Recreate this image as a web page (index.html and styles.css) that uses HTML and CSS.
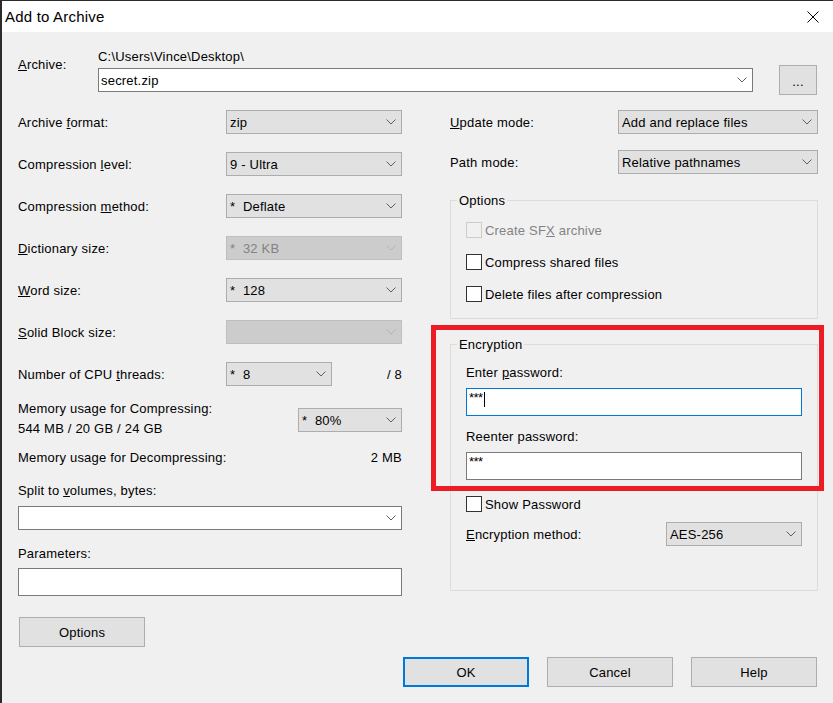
FILE: index.html
```html
<!DOCTYPE html>
<html lang="en">
<head>
<meta charset="utf-8">
<title>Add to Archive</title>
<link rel="stylesheet" href="styles.css">
</head>
<body>
<div class="window">
  <div class="titlebar">
    <span class="title">Add to Archive</span>
    <svg class="close" width="12" height="12" viewBox="0 0 12 12"><path d="M0.5 0.5L11.5 11.5M11.5 0.5L0.5 11.5" stroke="#000" stroke-width="1" fill="none"/></svg>
  </div>
  <div class="content">
    <div class="archive">
      <div class="archive-label"><u>A</u>rchive:</div>
      <div class="archive-body">
        <div class="path">C:\Users\Vince\Desktop\</div>
        <div class="archive-row">
          <div class="combo archive-combo"><span class="val">secret.zip</span><svg class="chev" width="10" height="6" viewBox="0 0 10 6"><path d="M0.5 0.5L5 5L9.5 0.5" fill="none" stroke="currentColor"/></svg></div>
          <div class="btn btn-browse">...</div>
        </div>
      </div>
    </div>

    <div class="main">
      <div class="left">
        <div class="field"><span class="lbl">Archive <u>f</u>ormat:</span><div class="select w176"><span class="val">zip</span><svg class="chev" width="10" height="6" viewBox="0 0 10 6"><path d="M0.5 0.5L5 5L9.5 0.5" fill="none" stroke="currentColor"/></svg></div></div>
        <div class="field"><span class="lbl">Compression <u>l</u>evel:</span><div class="select w176"><span class="val">9 - Ultra</span><svg class="chev" width="10" height="6" viewBox="0 0 10 6"><path d="M0.5 0.5L5 5L9.5 0.5" fill="none" stroke="currentColor"/></svg></div></div>
        <div class="field"><span class="lbl">Compression <u>m</u>ethod:</span><div class="select w176"><span class="val">*  Deflate</span><svg class="chev" width="10" height="6" viewBox="0 0 10 6"><path d="M0.5 0.5L5 5L9.5 0.5" fill="none" stroke="currentColor"/></svg></div></div>
        <div class="field"><span class="lbl"><u>D</u>ictionary size:</span><div class="select w176 disabled"><span class="val">*  32 KB</span><svg class="chev" width="10" height="6" viewBox="0 0 10 6"><path d="M0.5 0.5L5 5L9.5 0.5" fill="none" stroke="currentColor"/></svg></div></div>
        <div class="field"><span class="lbl"><u>W</u>ord size:</span><div class="select w176"><span class="val">*  128</span><svg class="chev" width="10" height="6" viewBox="0 0 10 6"><path d="M0.5 0.5L5 5L9.5 0.5" fill="none" stroke="currentColor"/></svg></div></div>
        <div class="field"><span class="lbl"><u>S</u>olid Block size:</span><div class="select w176 disabled"><span class="val"></span><svg class="chev" width="10" height="6" viewBox="0 0 10 6"><path d="M0.5 0.5L5 5L9.5 0.5" fill="none" stroke="currentColor"/></svg></div></div>
        <div class="field"><span class="lbl">Number of CPU <u>t</u>hreads:</span><div class="select w106"><span class="val">*  8</span><svg class="chev" width="10" height="6" viewBox="0 0 10 6"><path d="M0.5 0.5L5 5L9.5 0.5" fill="none" stroke="currentColor"/></svg></div><span class="num">/ 8</span></div>
        <div class="field mem"><div class="lbl-mem">Memory usage for Compressing:<br>544 MB / 20 GB / 24 GB</div><div class="select w104"><span class="val">*  80%</span><svg class="chev" width="10" height="6" viewBox="0 0 10 6"><path d="M0.5 0.5L5 5L9.5 0.5" fill="none" stroke="currentColor"/></svg></div></div>
        <div class="field decomp"><span class="lbl-wide">Memory usage for Decompressing:</span><span class="num-r">2 MB</span></div>
        <div class="split-label">Split to <u>v</u>olumes, bytes:</div>
        <div class="combo split-combo"><span class="val"></span><svg class="chev" width="10" height="6" viewBox="0 0 10 6"><path d="M0.5 0.5L5 5L9.5 0.5" fill="none" stroke="currentColor"/></svg></div>
        <div class="param-label">Parameters:</div>
        <div class="textbox params"></div>
        <div class="btn btn-options">Options</div>
      </div>

      <div class="right">
        <div class="field"><span class="lbl-r"><u>U</u>pdate mode:</span><div class="select w200"><span class="val">Add and replace files</span><svg class="chev" width="10" height="6" viewBox="0 0 10 6"><path d="M0.5 0.5L5 5L9.5 0.5" fill="none" stroke="currentColor"/></svg></div></div>
        <div class="field path-row"><span class="lbl-r">Path mode:</span><div class="select w200"><span class="val">Relative pathnames</span><svg class="chev" width="10" height="6" viewBox="0 0 10 6"><path d="M0.5 0.5L5 5L9.5 0.5" fill="none" stroke="currentColor"/></svg></div></div>

        <fieldset class="group opts">
          <legend>Options</legend>
          <div class="group-body">
            <div class="check disabled"><span class="box"></span><span class="ctext">Create SF<u>X</u> archive</span></div>
            <div class="check"><span class="box"></span><span class="ctext">Compress shared files</span></div>
            <div class="check"><span class="box"></span><span class="ctext">Delete files after compression</span></div>
          </div>
        </fieldset>

        <fieldset class="group enc">
          <legend>Encryption</legend>
          <div class="group-body">
            <div class="elabel first">Enter <u>p</u>assword:</div>
            <div class="textbox pw focus"><span class="stars">***</span><span class="caret"></span></div>
            <div class="elabel">Reenter password:</div>
            <div class="textbox pw"><span class="stars">***</span></div>
            <div class="check show"><span class="box"></span><span class="ctext">Show Password</span></div>
            <div class="field enc-row"><span class="lbl-e"><u>E</u>ncryption method:</span><div class="select w136"><span class="val">AES-256</span><svg class="chev" width="10" height="6" viewBox="0 0 10 6"><path d="M0.5 0.5L5 5L9.5 0.5" fill="none" stroke="currentColor"/></svg></div></div>
          </div>
        </fieldset>
      </div>
    </div>

    <div class="footer">
      <div class="btn btn-ok">OK</div>
      <div class="btn">Cancel</div>
      <div class="btn">Help</div>
    </div>
  </div>
  <div class="annot"></div>
</div>
</body>
</html>
```

FILE: styles.css
```css
html, body {
  margin: 0;
  padding: 0;
  background: #f0f0f0;
}
body {
  font-family: "Liberation Sans", Arial, sans-serif;
  font-size: 13px;
  line-height: 16px;
  letter-spacing: 0.2px;
  color: #000;
}
u {
  text-decoration: underline;
  text-underline-offset: 1px;
}
.window {
  position: relative;
  width: 833px;
  height: 703px;
  box-sizing: border-box;
  border-left: 2px solid #2b2b2b;
  border-top: 1px solid #2b2b2b;
  background: #f0f0f0;
  overflow: hidden;
}
.titlebar {
  height: 31px;
  background: #fff;
  display: flex;
  align-items: center;
  justify-content: space-between;
  padding: 0 14px 0 3px;
}
.title {
  font-size: 15px;
  line-height: 18px;
}
.close {
  display: block;
}
.content {
  padding: 16px 15px 0 16px;
}

/* archive row */
.archive {
  display: flex;
}
.archive-label {
  width: 80px;
  flex: none;
  padding-top: 9px;
}
.archive-body {
  flex: 1;
}
.path {
  height: 16px;
  margin-bottom: 1px;
  padding-top: 1px;
  box-sizing: border-box;
}
.archive-row {
  display: flex;
  align-items: center;
  gap: 26px;
  height: 30px;
  padding-right: 1px;
}

/* controls */
.select, .combo {
  box-sizing: border-box;
  height: 24px;
  display: flex;
  align-items: center;
  justify-content: space-between;
  padding: 0 5px 0 3px;
  border: 1px solid #adadad;
  background: #e1e1e1;
  color: #000;
  flex: none;
}
.archive-row .archive-combo {
  flex: 1 1 auto;
  min-width: 0;
}
.select .val, .combo .val {
  white-space: pre;
  padding-top: 1px;
}
.chev {
  display: block;
  flex: none;
  color: #606060;
}
.select.disabled {
  background: #cccccc;
  border-color: #bfbfbf;
  color: #838383;
}
.select.disabled .chev {
  color: #b4b4b4;
}
.combo {
  background: #fff;
  border-color: #7a7a7a;
  padding-left: 2px;
}
.w176 { width: 176px; }
.w106 { width: 106px; }
.w104 { width: 104px; }
.w200 { width: 200px; }
.w136 { width: 136px; }

.textbox {
  box-sizing: border-box;
  height: 28px;
  background: #fff;
  border: 1px solid #7a7a7a;
}
.btn {
  box-sizing: border-box;
  width: 126px;
  height: 30px;
  display: flex;
  align-items: center;
  justify-content: center;
  padding-top: 1px;
  background: #e1e1e1;
  border: 1px solid #adadad;
  flex: none;
}
.btn-browse {
  width: 38px;
  padding-top: 4px;
}
.btn-ok {
  border: 2px solid #0078d7;
}

/* main columns */
.main {
  display: flex;
  gap: 48px;
  margin-top: 15px;
  align-items: flex-start;
}
.left {
  width: 384px;
  display: flex;
  flex-direction: column;
}
.right {
  width: 368px;
  display: flex;
  flex-direction: column;
}
.field {
  display: flex;
  align-items: center;
  height: 24px;
}
.field > span {
  padding-top: 1px;
}
.left .field + .field {
  margin-top: 18px;
}
.lbl {
  width: 208px;
  flex: none;
}
.num {
  flex: 1;
  text-align: right;
}
.num-r {
  flex: none;
  margin-left: auto;
  white-space: nowrap;
}
.left .field.mem {
  margin-top: 12px;
  height: 40px;
  align-items: flex-start;
}
.lbl-mem {
  flex: 1;
  line-height: 20px;
  padding-top: 1px;
}
.mem .select {
  margin-top: 10px;
}
.left .field.decomp {
  margin-top: 11px;
  height: 16px;
}
.lbl-wide {
  flex: none;
  white-space: nowrap;
}
.split-label {
  margin-top: 17px;
  padding-top: 1px;
  height: 16px;
}
.split-combo {
  margin-top: 7px;
  width: 100%;
}
.param-label {
  margin-top: 15px;
  padding-top: 1px;
  height: 16px;
}
.params {
  margin-top: 6px;
  width: 100%;
}
.btn-options {
  margin-top: 21px;
  margin-left: 1px;
}

/* right column */
.lbl-r {
  flex: 1;
}
.path-row {
  margin-top: 16px;
}
.group {
  margin: 0;
  border: 1px solid #dcdcdc;
  padding: 0 15px 16px 6px;
  min-width: 0;
}
.group legend {
  padding: 1px 2px 0;
  line-height: 16px;
}
.group-body {
  margin-left: 9px;
  display: flex;
  flex-direction: column;
}
.opts {
  margin-top: 18px;
}
.check {
  display: flex;
  align-items: center;
  height: 16px;
  gap: 3px;
  margin-top: 16px;
}
.ctext {
  padding-top: 1px;
}
.opts .check:first-child {
  margin-top: 13px;
}
.box {
  box-sizing: border-box;
  width: 16px;
  height: 16px;
  border: 1px solid #333;
  background: #fff;
  flex: none;
}
.check.disabled {
  color: #838383;
}
.check.disabled .box {
  border-color: #cccccc;
  background: #f0f0f0;
}

.enc {
  margin-top: 17px;
  padding-bottom: 44px;
}
.elabel {
  margin-top: 12px;
  padding-top: 1px;
  height: 16px;
}
.elabel.first {
  margin-top: 11px;
}
.pw {
  margin-top: 7px;
  padding: 1px 2px;
  display: flex;
  align-items: flex-start;
}
.pw.focus {
  border-color: #0078d7;
}
.stars {
  line-height: 16px;
  letter-spacing: -0.5px;
}
.caret {
  display: block;
  width: 1px;
  height: 15px;
  margin-top: 2px;
  margin-left: 1px;
  background: #000;
}
.check.show {
  margin-top: 16px;
}
.enc-row {
  margin-top: 10px;
}
.lbl-e {
  flex: 1;
}

/* footer */
.footer {
  display: flex;
  justify-content: flex-end;
  gap: 18px;
  margin-top: 10px;
  padding-right: 1px;
}

/* red annotation rectangle drawn over the dialog */
.annot {
  position: absolute;
  left: 429px;
  top: 324px;
  width: 393px;
  height: 166px;
  box-sizing: border-box;
  border: 5px solid #ed1c24;
  pointer-events: none;
}
```
